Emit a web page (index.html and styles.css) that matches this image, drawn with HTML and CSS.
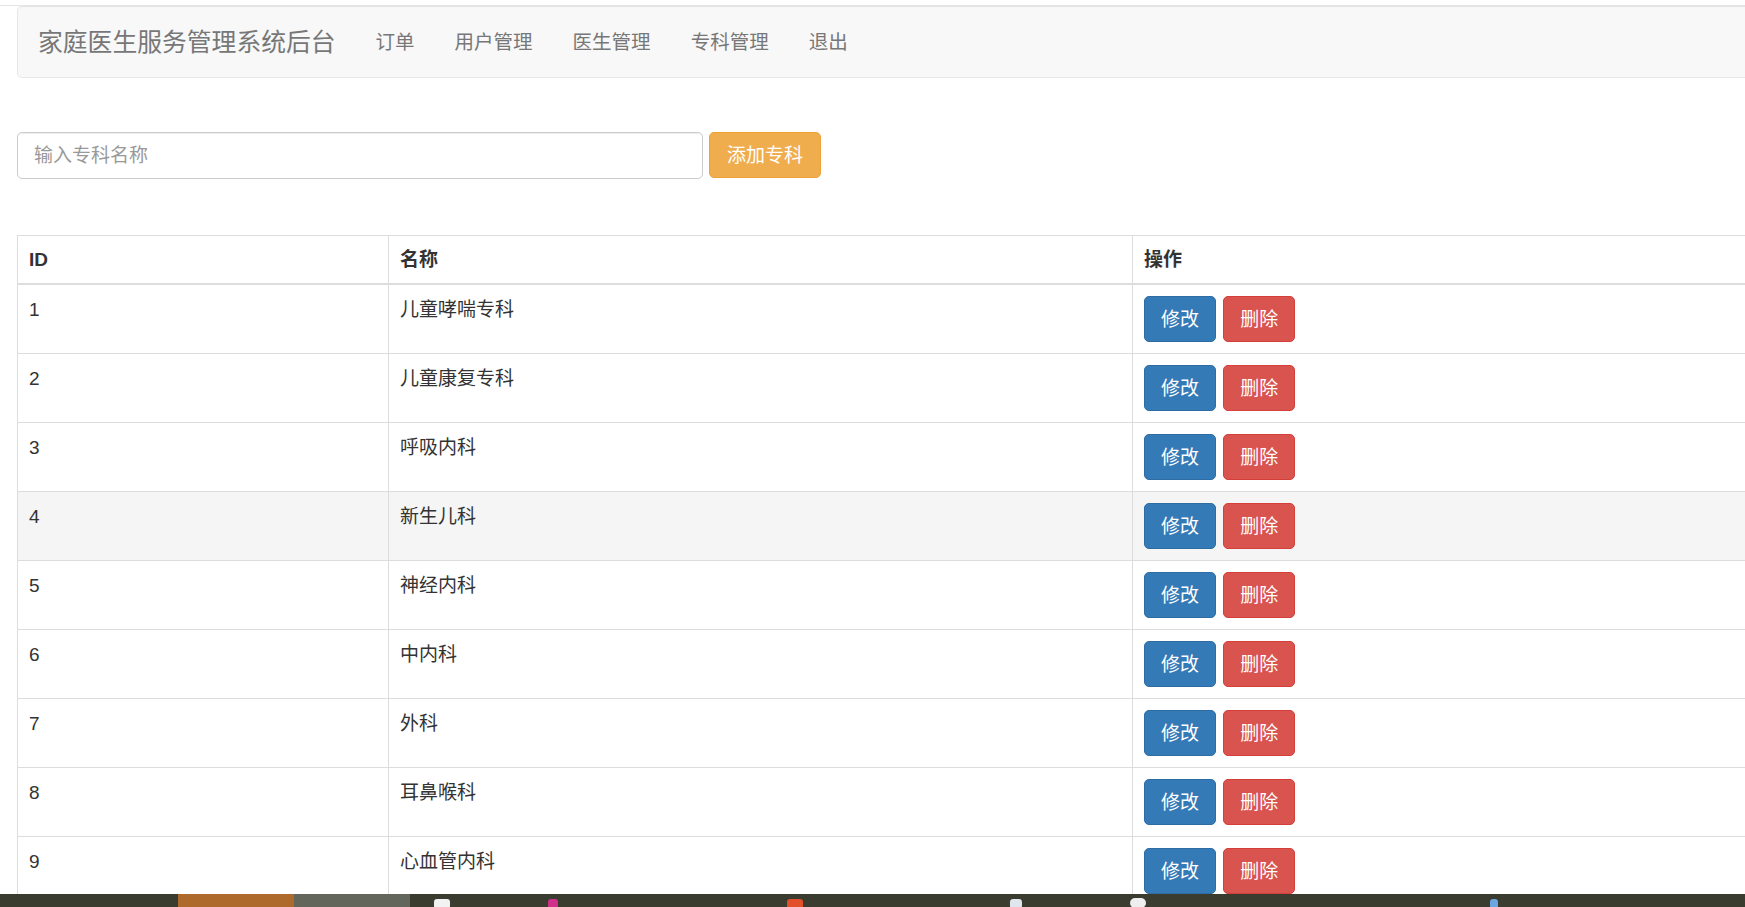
FILE: index.html
```html
<!DOCTYPE html>
<html lang="zh-CN">
<head>
<meta charset="utf-8">
<title>家庭医生服务管理系统后台</title>
<link rel="stylesheet" href="styles.css">
</head>
<body>
<div class="topline"></div>
<div class="page">
  <nav class="navbar">
    <a class="brand" href="#">家庭医生服务管理系统后台</a>
    <ul class="nav">
      <li><a href="#">订单</a></li>
      <li><a href="#">用户管理</a></li>
      <li><a href="#">医生管理</a></li>
      <li><a href="#">专科管理</a></li>
      <li><a href="#">退出</a></li>
    </ul>
  </nav>

  <form class="add-form">
    <input class="form-control" type="text" placeholder="输入专科名称">
    <button class="btn btn-warning" type="button">添加专科</button>
  </form>

  <table class="table">
    <colgroup>
      <col class="col-id">
      <col class="col-name">
      <col class="col-op">
    </colgroup>
    <thead>
      <tr><th>ID</th><th>名称</th><th>操作</th></tr>
    </thead>
    <tbody>
      <tr><td>1</td><td>儿童哮喘专科</td><td><button class="btn btn-primary">修改</button> <button class="btn btn-danger">删除</button></td></tr>
      <tr><td>2</td><td>儿童康复专科</td><td><button class="btn btn-primary">修改</button> <button class="btn btn-danger">删除</button></td></tr>
      <tr><td>3</td><td>呼吸内科</td><td><button class="btn btn-primary">修改</button> <button class="btn btn-danger">删除</button></td></tr>
      <tr class="hover"><td>4</td><td>新生儿科</td><td><button class="btn btn-primary">修改</button> <button class="btn btn-danger">删除</button></td></tr>
      <tr><td>5</td><td>神经内科</td><td><button class="btn btn-primary">修改</button> <button class="btn btn-danger">删除</button></td></tr>
      <tr><td>6</td><td>中内科</td><td><button class="btn btn-primary">修改</button> <button class="btn btn-danger">删除</button></td></tr>
      <tr><td>7</td><td>外科</td><td><button class="btn btn-primary">修改</button> <button class="btn btn-danger">删除</button></td></tr>
      <tr><td>8</td><td>耳鼻喉科</td><td><button class="btn btn-primary">修改</button> <button class="btn btn-danger">删除</button></td></tr>
      <tr><td>9</td><td>心血管内科</td><td><button class="btn btn-primary">修改</button> <button class="btn btn-danger">删除</button></td></tr>
    </tbody>
  </table>
</div>

<div class="taskbar">
  <span class="tb-gap"></span>
  <span class="tb-item tb-active"></span>
  <span class="tb-item tb-open"></span>
  <span class="tb-icons">
    <span class="ic ic-white"></span>
    <span class="ic ic-pink"></span>
    <span class="ic ic-red"></span>
    <span class="ic ic-white2"></span>
    <span class="ic ic-circle"></span>
    <span class="ic ic-blue"></span>
  </span>
</div>
</body>
</html>
```

FILE: styles.css
```css
html, body {
  margin: 0;
  padding: 0;
  overflow: hidden;
  background: #fff;
}

body {
  font-family: "Liberation Sans", "Noto Sans CJK SC", sans-serif;
  font-size: 19px;
  line-height: 27px;
  color: #333;
}

.topline {
  height: 5px;
  border-bottom: 1px solid #e4e4e4;
}

.page {
  width: 2300px;
  padding-left: 17px;
}

/* navbar */
.navbar {
  display: flex;
  align-items: center;
  height: 70px;
  background: #f8f8f8;
  border: 1px solid #e7e7e7;
  border-top-color: #e4e4e4;
  border-radius: 5px;
  padding-left: 20px;
}

.brand {
  font-size: 24.8px;
  line-height: 27px;
  color: #777;
  text-decoration: none;
  padding-right: 20px;
}

.nav {
  display: flex;
  list-style: none;
  margin: 0;
  padding: 0;
}

.nav a {
  display: block;
  padding: 0 20px;
  font-size: 19.5px;
  color: #777;
  text-decoration: none;
}

/* form */
.add-form {
  display: flex;
  align-items: flex-start;
  gap: 6px;
  margin: 54px 0 0;
}

.form-control {
  box-sizing: border-box;
  width: 686px;
  height: 47px;
  padding: 0 16px;
  font-family: inherit;
  font-size: 19px;
  color: #555;
  background: #fff;
  border: 1px solid #ccc;
  border-radius: 5px;
  box-shadow: inset 0 1px 1px rgba(0, 0, 0, 0.075);
  outline: none;
}

.form-control::placeholder {
  color: #999;
}

.btn {
  box-sizing: border-box;
  height: 46px;
  padding: 0 16px;
  font-family: inherit;
  font-size: 19px;
  line-height: 27px;
  color: #fff;
  border: 1px solid transparent;
  border-radius: 5px;
  cursor: pointer;
  vertical-align: top;
}

.add-form .btn {
  width: 112px;
  padding: 0;
}

.btn-warning {
  background: #f0ad4e;
  border-color: #eea236;
}

.btn-primary {
  background: #337ab7;
  border-color: #2e6da4;
}

.btn-danger {
  background: #d9534f;
  border-color: #d43f3a;
}

/* table */
.table {
  margin-top: 56px;
  border-collapse: collapse;
  table-layout: fixed;
  width: 2200px;
  border: 1px solid #ddd;
}

.col-id { width: 371px; }
.col-name { width: 744px; }

.table th,
.table td {
  padding: 11px 11px;
  text-align: left;
  vertical-align: top;
  border: 1px solid #ddd;
  line-height: 27px;
}

.table th {
  font-weight: bold;
  border-bottom-width: 2px;
  padding-top: 10px;
  padding-bottom: 10px;
}

.table td .btn + .btn {
  margin-left: 2px;
}

.table tr.hover td {
  background: #f5f5f5;
}

/* taskbar overlay at the bottom of the screen */
.taskbar {
  position: fixed;
  left: 0;
  right: 0;
  bottom: 0;
  height: 13px;
  background: #393c2e;
  display: flex;
  align-items: stretch;
}

.tb-gap {
  width: 178px;
}

.tb-item {
  width: 116px;
}

.tb-active {
  background: #ad6a2a;
}

.tb-open {
  background: #63665a;
}

.tb-icons {
  position: relative;
  flex: 1;
}

.ic {
  position: absolute;
  top: 5px;
  width: 16px;
  height: 10px;
  border-radius: 3px;
}

.ic-white { left: 24px; background: #f2f2f2; }
.ic-pink { left: 138px; width: 10px; background: #d0308a; }
.ic-red { left: 377px; background: #e2502a; }
.ic-white2 { left: 600px; width: 12px; background: #dfe6ee; }
.ic-circle { left: 720px; width: 16px; border-radius: 8px; top: 4px; background: #eeeeee; }
.ic-blue { left: 1080px; width: 8px; background: #6aa6e0; }
```
